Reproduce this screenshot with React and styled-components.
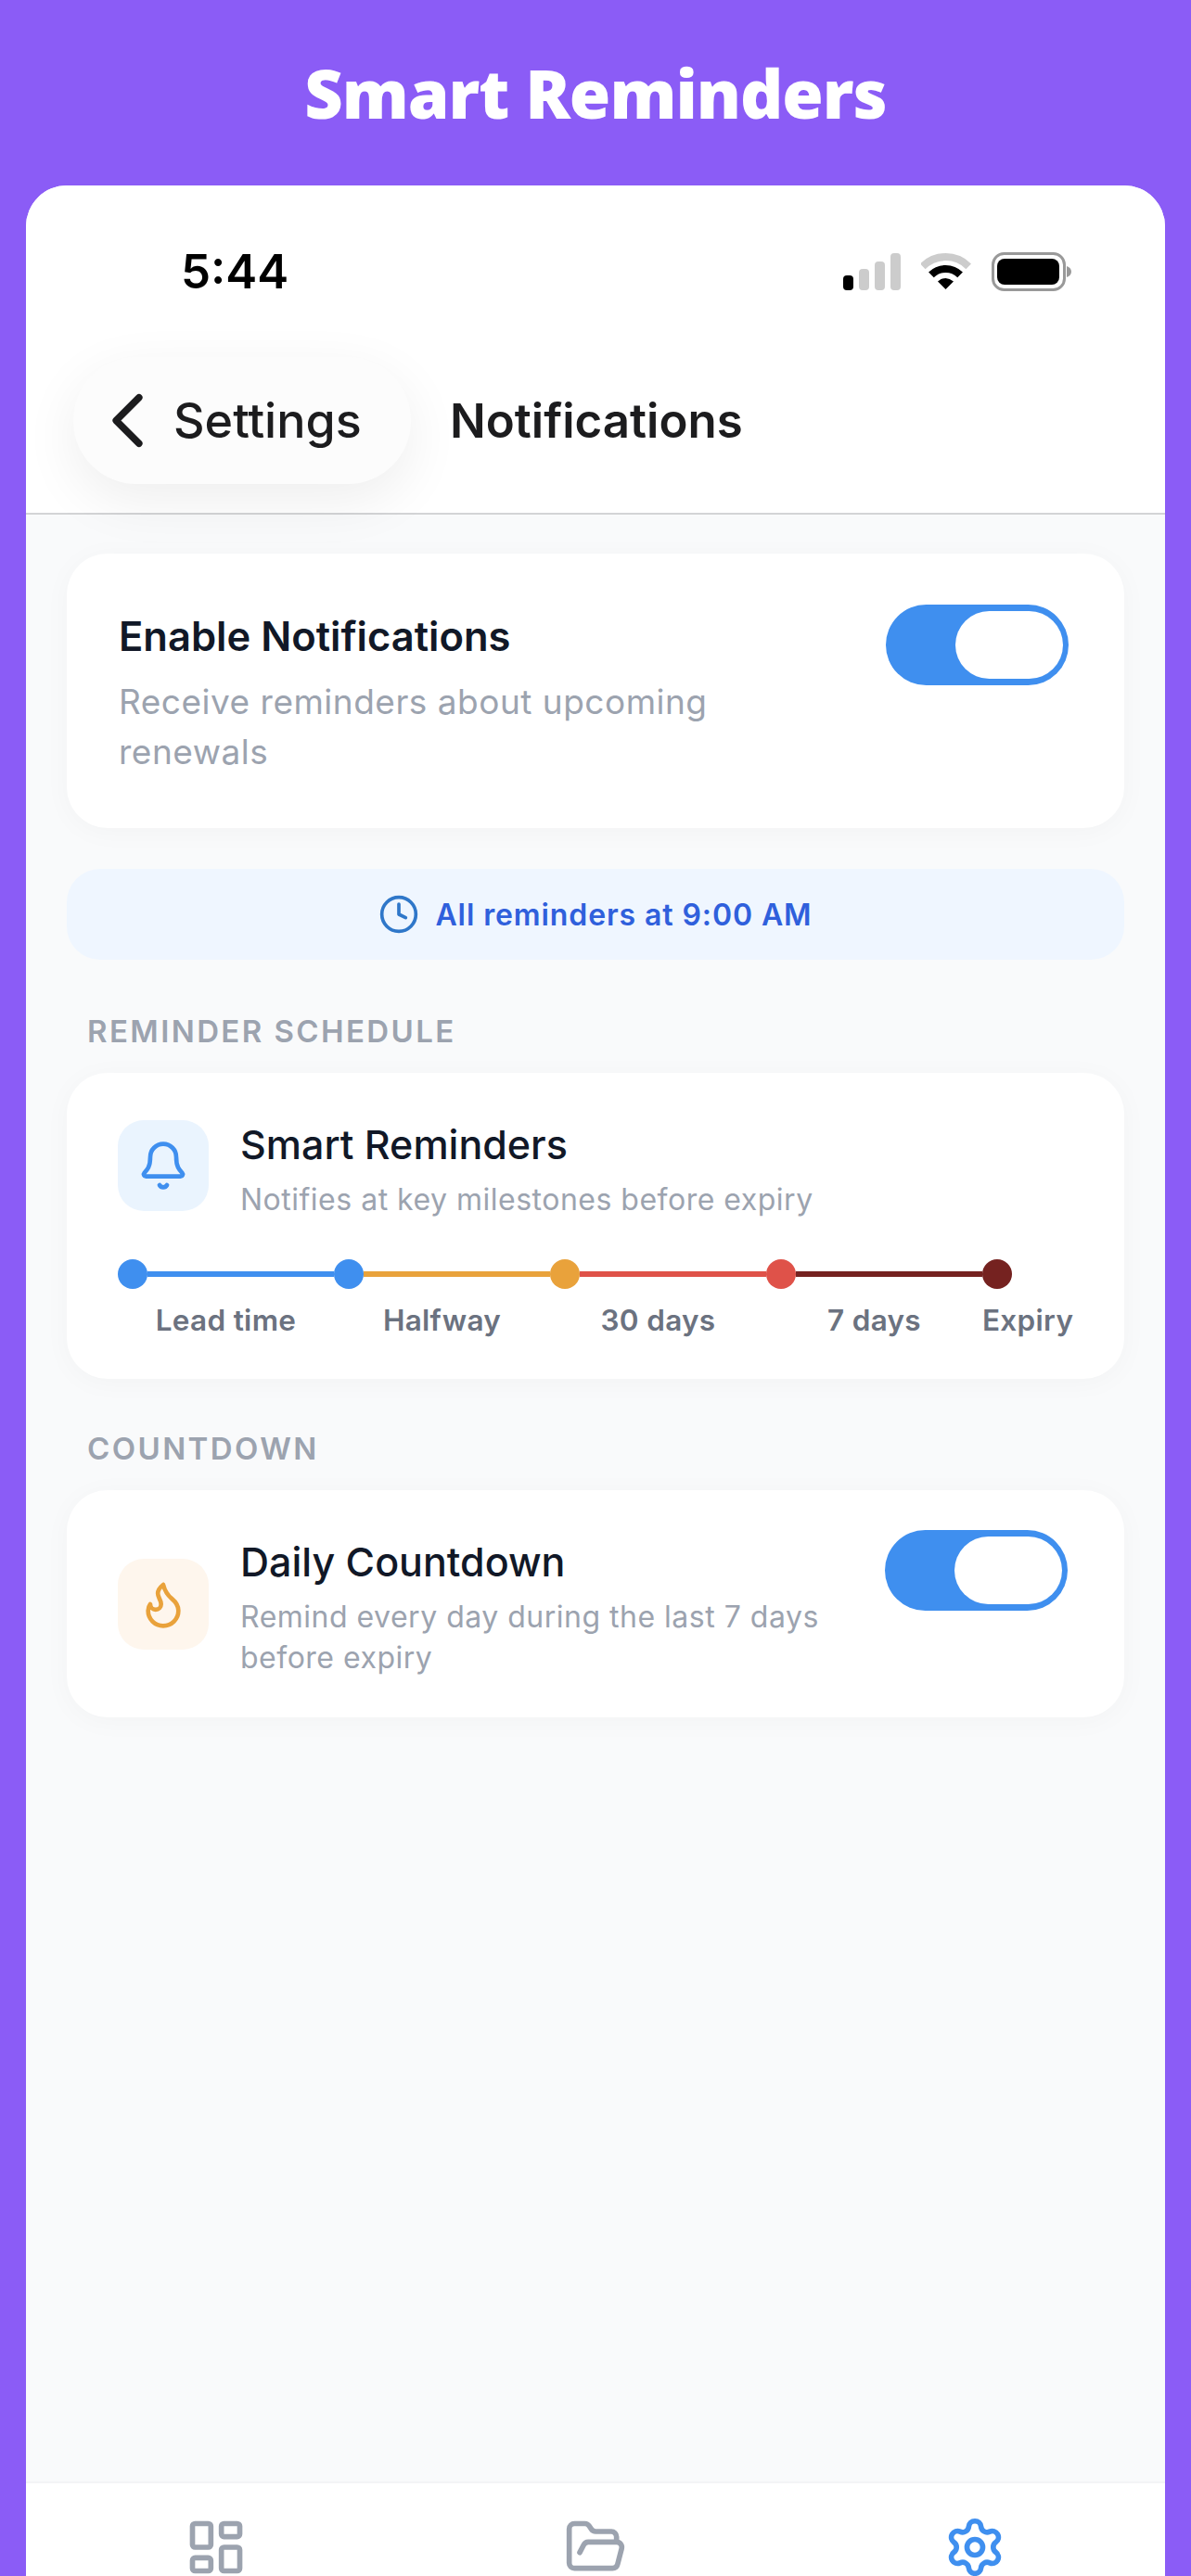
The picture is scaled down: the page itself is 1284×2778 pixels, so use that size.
import React from 'react';
import styled, { createGlobalStyle } from 'styled-components';
import { Bell, ChevronLeft, Clock, Flame, FolderOpen, LayoutDashboard, Settings } from 'lucide-react';

const GlobalStyle = createGlobalStyle`
  html, body {
    margin: 0;
    height: 2778px;
    overflow: hidden;
    background: #8b5cf6;
    font-family: 'Inter', 'Liberation Sans', sans-serif;
  }
  * { box-sizing: border-box; }
`;

const Page = styled.div`
  display: flex;
  flex-direction: column;
  height: 2778px;
  padding: 0 28px;
`;

const Headline = styled.h1`
  height: 200px;
  margin: 0;
  display: flex;
  align-items: center;
  justify-content: center;
  font-family: 'Open Sans', sans-serif;
  font-size: 72px;
  font-weight: 800;
  letter-spacing: -1px;
  color: #fff;
`;

const Phone = styled.div`
  flex: 1;
  min-height: 0;
  display: flex;
  flex-direction: column;
  overflow: hidden;
  background: #f9fafb;
  border-radius: 44px 44px 0 0;
`;

const TopArea = styled.div`
  background: #fff;
  border-bottom: 2px solid #d3d4d6;
`;

const StatusBar = styled.div`
  height: 185px;
  display: flex;
  align-items: center;
  justify-content: space-between;
  padding: 0 101px 0 167px;
`;

const Time = styled.span`
  font-size: 51px;
  font-weight: 600;
  color: #000;
`;

const StatusIcons = styled.div`
  display: flex;
  align-items: center;
  gap: 22px;
`;

const NavRow = styled.div`
  display: flex;
  align-items: center;
  gap: 42px;
  padding: 0 0 31px 51px;
`;

const BackPill = styled.div`
  width: 364px;
  height: 137px;
  display: flex;
  align-items: center;
  gap: 0;
  padding-left: 9px;
  border-radius: 68px;
  background: #fcfcfc;
  box-shadow: 0 18px 60px rgba(0, 0, 0, 0.07);
  font-size: 52px;
  font-weight: 500;
  color: #1c1c1e;
`;

const NavTitle = styled.span`
  font-size: 51px;
  font-weight: 600;
  color: #1c1c1e;
`;

const Content = styled.div`
  flex: 1;
  display: flex;
  flex-direction: column;
  padding: 42px 44px 0;
`;

const Card = styled.div`
  background: #fff;
  border-radius: 44px;
  box-shadow: 0 4px 30px rgba(0, 0, 0, 0.03);
  padding: ${p => p.$padding};
`;

const SpacedRow = styled.div`
  display: flex;
  align-items: flex-start;
  justify-content: space-between;
`;

const TextColumn = styled.div`
  padding-top: ${p => p.$top || 0}px;
`;

const CardTitle = styled.div`
  font-size: ${p => p.$size || 43}px;
  line-height: 52px;
  font-weight: ${p => p.$weight || 500};
  color: #111827;
`;

const SubText = styled.p`
  margin: ${p => p.$margin || '0'};
  max-width: ${p => p.$maxWidth || 'none'};
  font-size: ${p => p.$size}px;
  line-height: ${p => p.$line}px;
  letter-spacing: 0.5px;
  color: #9ca3af;
`;

const Toggle = styled.div`
  flex: none;
  width: 197px;
  height: 87px;
  display: flex;
  justify-content: flex-end;
  padding: 7px 6px;
  border-radius: 44px;
  background: #3f8fef;
`;

const Knob = styled.div`
  width: 116px;
  height: 73px;
  border-radius: 37px;
  background: #fff;
`;

const Banner = styled.div`
  height: 98px;
  margin-top: 44px;
  display: flex;
  align-items: center;
  justify-content: center;
  gap: 17px;
  border-radius: 36px;
  background: #eff6ff;
  font-size: 32px;
  font-weight: 600;
  letter-spacing: 0.9px;
  color: #2f60dc;
`;

const SectionLabel = styled.div`
  margin: ${p => p.$top}px 0 26px;
  padding-left: 22px;
  font-size: 33px;
  line-height: 38px;
  font-weight: 600;
  letter-spacing: 2.4px;
  color: #9ca3af;
`;

const IconRow = styled.div`
  display: flex;
  align-items: ${p => p.$align || 'flex-start'};
  gap: 34px;
`;

const IconBox = styled.div`
  flex: none;
  width: 98px;
  height: 98px;
  display: flex;
  align-items: center;
  justify-content: center;
  border-radius: 28px;
  background: ${p => p.$bg};
  color: ${p => p.$color};
`;

const Timeline = styled.div`
  display: flex;
  align-items: center;
  margin-top: 42px;
`;

const Segment = styled.div`
  flex: 0 0 233px;
  display: flex;
  align-items: center;
`;

const Dot = styled.span`
  flex: none;
  width: 32px;
  height: 32px;
  border-radius: 50%;
  background: ${p => p.$color};
`;

const Line = styled.span`
  flex: 1;
  height: 6px;
  background: ${p => p.$color};
`;

const LabelRow = styled.div`
  display: flex;
  margin-top: 15px;
`;

const StepLabel = styled.span`
  flex: ${p => (p.$last ? '0 0 auto' : '0 0 233px')};
  text-align: center;
  font-size: 31.5px;
  line-height: 38px;
  font-weight: 600;
  letter-spacing: 0.3px;
  color: #6b7280;
`;

const TabBar = styled.div`
  flex: 0 0 102px;
  min-height: 0;
  display: grid;
  grid-template-columns: repeat(3, 1fr);
  justify-items: center;
  padding-top: 35px;
  background: #fff;
  border-top: 2px solid #f3f4f6;
  color: #9ca3af;
`;

const steps = [
  { label: 'Lead time', dot: '#3f8fef', line: '#3f8fef' },
  { label: 'Halfway', dot: '#3f8fef', line: '#e9a23b' },
  { label: '30 days', dot: '#e9a23b', line: '#df5249' },
  { label: '7 days', dot: '#df5249', line: '#752220' },
];

function SignalIcon() {
  return (
    <svg width="62" height="40" viewBox="0 0 62 40">
      <rect x="0" y="24" width="11" height="16" rx="4" fill="#000" />
      <rect x="17" y="17" width="11" height="23" rx="4" fill="#ccc" />
      <rect x="34" y="9" width="11" height="31" rx="4" fill="#ccc" />
      <rect x="51" y="0" width="11" height="40" rx="4" fill="#ccc" />
    </svg>
  );
}

function WifiIcon() {
  return (
    <svg width="54" height="40" viewBox="0 0 54 40" fill="none">
      <path d="M1.8 14.3A35 35 0 0 1 51.2 14.3" stroke="#ccc" strokeWidth="8" />
      <path d="M10.9 23.4A22 22 0 0 1 42.1 23.4" stroke="#000" strokeWidth="8" />
      <path d="M26.5 39L18 30.5Q26.5 23.5 35 30.5Z" fill="#000" />
    </svg>
  );
}

function BatteryIcon() {
  return (
    <svg width="86" height="42" viewBox="0 0 86 42">
      <rect x="1.5" y="1.5" width="77" height="39" rx="12" fill="none" stroke="#999" strokeWidth="3" />
      <rect x="6" y="7" width="67" height="28" rx="8" fill="#000" />
      <path d="M81 15c3 1 5 3 5 6s-2 5-5 6z" fill="#999" />
    </svg>
  );
}

export default function App() {
  return (
    <Page>
      <GlobalStyle />
      <Headline>Smart Reminders</Headline>
      <Phone>
        <TopArea>
          <StatusBar>
            <Time>5:44</Time>
            <StatusIcons>
              <SignalIcon />
              <WifiIcon />
              <BatteryIcon />
            </StatusIcons>
          </StatusBar>
          <NavRow>
            <BackPill>
              <ChevronLeft size={99} strokeWidth={1.8} color="#1c1c1e" />
              Settings
            </BackPill>
            <NavTitle>Notifications</NavTitle>
          </NavRow>
        </TopArea>

        <Content>
          <Card $padding="55px 60px 55px 56px">
            <SpacedRow>
              <TextColumn $top={8}>
                <CardTitle $weight={600} $size={43.5}>Enable Notifications</CardTitle>
                <SubText $size={37} $line={54} $maxWidth="720px" $margin="18px 0 0">
                  Receive reminders about upcoming renewals
                </SubText>
              </TextColumn>
              <Toggle><Knob /></Toggle>
            </SpacedRow>
          </Card>

          <Banner>
            <Clock size={44} strokeWidth={2} color="#2f77c9" />
            All reminders at 9:00 AM
          </Banner>

          <SectionLabel $top={58}>REMINDER SCHEDULE</SectionLabel>
          <Card $padding="51px 55px 44px">
            <IconRow>
              <IconBox $bg="#eaf4fe" $color="#3f8fef"><Bell size={56} strokeWidth={2} /></IconBox>
              <TextColumn>
                <CardTitle>Smart Reminders</CardTitle>
                <SubText $size={32} $line={44} $margin="12px 0 0">Notifies at key milestones before expiry</SubText>
              </TextColumn>
            </IconRow>
            <Timeline>
              {steps.map(step => (
                <Segment key={step.label}>
                  <Dot $color={step.dot} />
                  <Line $color={step.line} />
                </Segment>
              ))}
              <Dot $color="#752220" />
            </Timeline>
            <LabelRow>
              {steps.map(step => <StepLabel key={step.label}>{step.label}</StepLabel>)}
              <StepLabel $last>Expiry</StepLabel>
            </LabelRow>
          </Card>

          <SectionLabel $top={56}>COUNTDOWN</SectionLabel>
          <Card $padding="43px 61px 42px 55px">
            <SpacedRow>
              <IconRow $align="center">
                <IconBox $bg="#fef6ed" $color="#e9a23b"><Flame size={56} strokeWidth={2} /></IconBox>
                <TextColumn $top={8}>
                  <CardTitle>Daily Countdown</CardTitle>
                  <SubText $size={32} $line={44} $maxWidth="660px" $margin="12px 0 0">
                    Remind every day during the last 7 days before expiry
                  </SubText>
                </TextColumn>
              </IconRow>
              <Toggle><Knob /></Toggle>
            </SpacedRow>
          </Card>
        </Content>

        <TabBar>
          <LayoutDashboard size={68} strokeWidth={2} />
          <FolderOpen size={68} strokeWidth={2} />
          <Settings size={68} strokeWidth={2} color="#3f8fef" />
        </TabBar>
      </Phone>
    </Page>
  );
}
